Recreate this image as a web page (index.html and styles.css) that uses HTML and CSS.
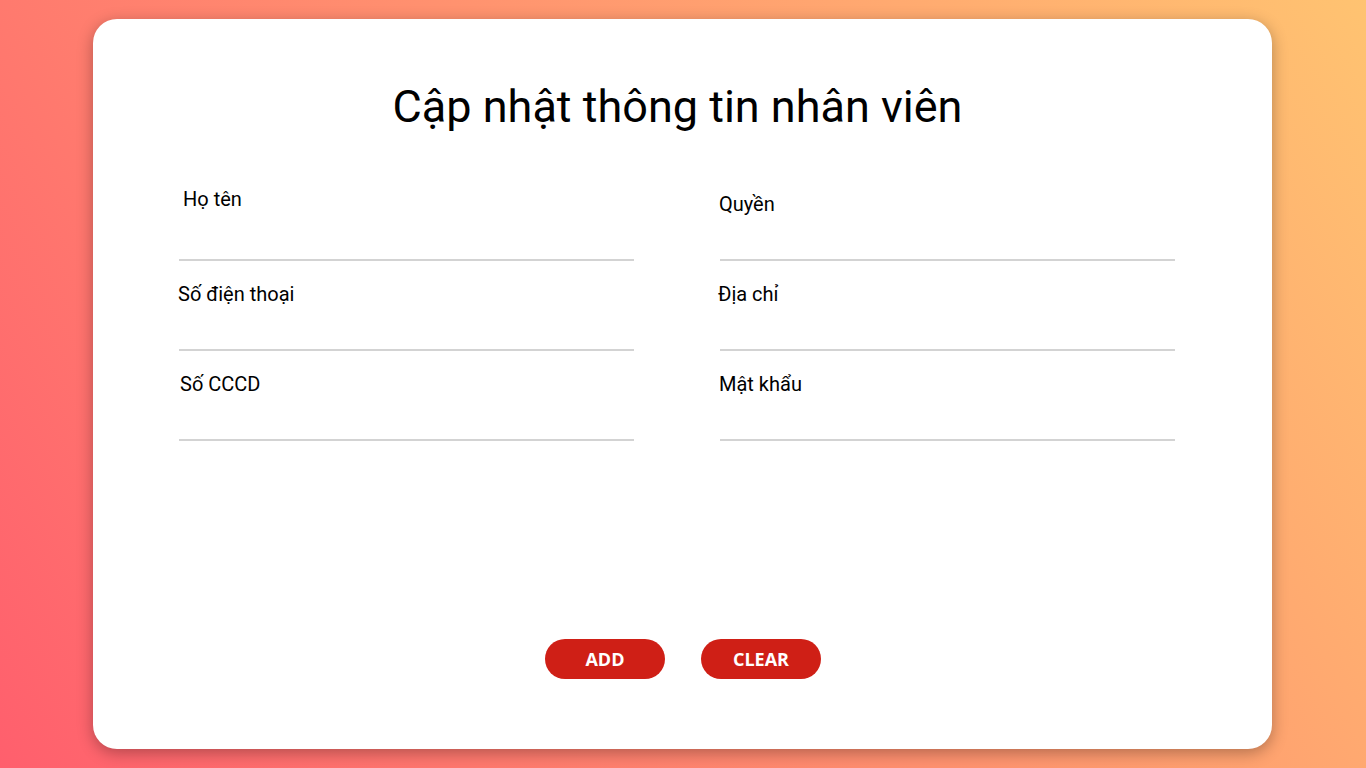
FILE: index.html
```html
<!DOCTYPE html>
<html lang="vi">
<head>
<meta charset="utf-8">
<title>Cập nhật thông tin nhân viên</title>
<link rel="stylesheet" href="styles.css">
</head>
<body>
<div class="page">
  <div class="card">
    <div class="content">
      <h1 class="title">Cập nhật thông tin nhân viên</h1>
      <form class="form">
        <div class="field">
          <label class="label label--name">Họ tên</label>
          <input class="input" type="text">
        </div>
        <div class="field">
          <label class="label">Quyền</label>
          <input class="input" type="text">
        </div>
        <div class="field">
          <label class="label">Số điện thoại</label>
          <input class="input" type="text">
        </div>
        <div class="field">
          <label class="label label--addr">Địa chỉ</label>
          <input class="input" type="text">
        </div>
        <div class="field">
          <label class="label label--id">Số CCCD</label>
          <input class="input" type="text">
        </div>
        <div class="field">
          <label class="label">Mật khẩu</label>
          <input class="input" type="password">
        </div>
      </form>
    </div>
    <div class="actions">
      <button class="btn" type="button">ADD</button>
      <button class="btn" type="button">CLEAR</button>
    </div>
  </div>
</div>
</body>
</html>
```

FILE: styles.css
```css
* {
  box-sizing: border-box;
}

html, body {
  margin: 0;
  padding: 0;
  height: 100%;
}

body {
  font-family: Roboto, "Noto Sans", Arial, sans-serif;
  background: linear-gradient(57deg, #ff5f6d, #ffc371);
  overflow: hidden;
}

.page {
  height: 768px;
  padding: 19px 0 0 93px;
}

.card {
  width: 1179px;
  height: 730px;
  background: #ffffff;
  border-radius: 24px;
  box-shadow: 0 4px 16px rgba(0, 0, 0, 0.3);
  display: flex;
  flex-direction: column;
}

.content {
  padding: 61px 96px 0 86px;
}

.title {
  margin: 0;
  font-family: Roboto, sans-serif;
  font-weight: 400;
  font-size: 45px;
  line-height: 53px;
  color: #000000;
  text-align: center;
}

.form {
  margin-top: 38px;
  display: grid;
  grid-template-columns: 455px 455px;
  column-gap: 86px;
}

.field {
  display: flex;
  flex-direction: column;
  padding-top: 22px;
}

.label {
  font-family: Roboto, sans-serif;
  font-size: 20px;
  line-height: 23px;
  color: #000000;
  margin-left: -1px;
}

.label--name {
  margin-left: 4px;
  margin-top: -5px;
  margin-bottom: 5px;
}

.label--addr {
  margin-left: -2px;
}

.label--id {
  margin-left: 1px;
}

.input {
  height: 45px;
  border: none;
  border-bottom: 2px solid #d3d3d3;
  outline: none;
  background: transparent;
  font-family: Roboto, sans-serif;
  font-size: 18px;
  padding: 0;
}

.actions {
  margin-top: auto;
  padding-bottom: 70px;
  display: flex;
  justify-content: center;
  gap: 36px;
  padding-left: 1px;
}

.btn {
  width: 120px;
  height: 40px;
  border: none;
  border-radius: 20px;
  background: #cf1f16;
  color: #ffffff;
  font-family: "Open Sans", sans-serif;
  font-weight: 700;
  font-size: 18px;
  padding: 0;
  cursor: pointer;
}
```
